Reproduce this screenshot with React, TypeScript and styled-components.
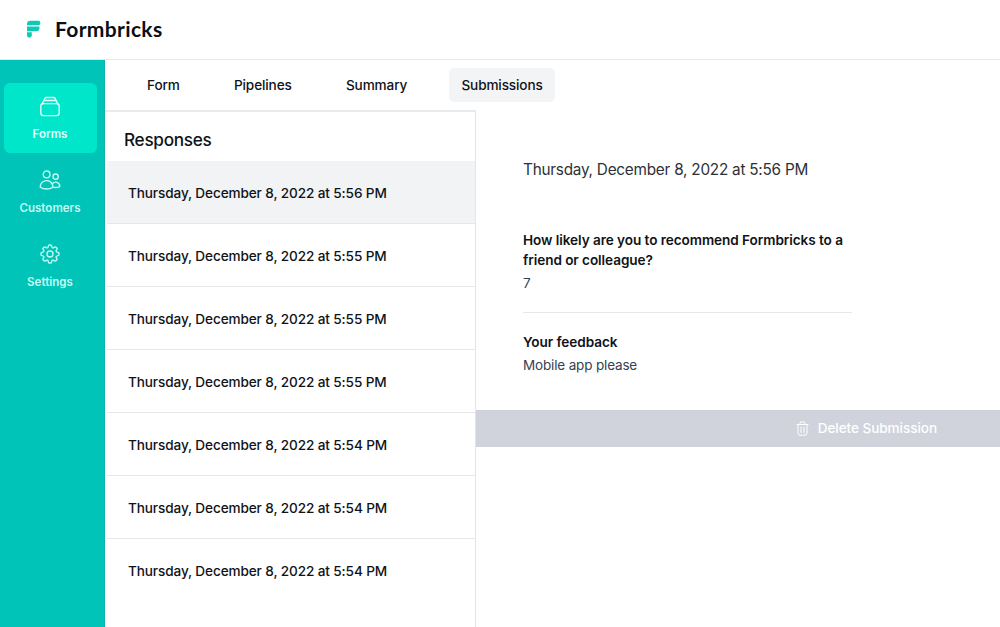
import React from "react";
import styled, { createGlobalStyle } from "styled-components";
import { HiOutlineCog8Tooth, HiOutlineUsers } from "react-icons/hi2";

const GlobalStyle = createGlobalStyle`
  *, *::before, *::after { box-sizing: border-box; }
  body { margin: 0; background: #fff; font-family: Inter, "Liberation Sans", sans-serif; color: #101317; }
  h1, h2, h3, p, ul { margin: 0; padding: 0; font-weight: inherit; font-size: inherit; }
  ul { list-style: none; }
`;

const Page = styled.div`
  display: flex;
  flex-direction: column;
  height: 627px;
  overflow: hidden;
`;

const Header = styled.header`
  display: flex;
  align-items: center;
  flex: none;
  height: 60px;
  padding: 0 0 1px 26px;
  border-bottom: 1px solid #e6e8ea;
`;

const Brand = styled.span`
  margin-left: 14px;
  font: 700 21px/28px Lato, sans-serif;
  letter-spacing: 0.34px;
  color: #0b0f14;
`;

const Body = styled.div`
  display: flex;
  flex: 1;
  min-height: 0;
`;

const Sidebar = styled.nav`
  display: flex;
  flex-direction: column;
  gap: 4px;
  flex: none;
  width: 105px;
  padding: 23px 7px 0 4px;
  background: #00c4b8;
  border-right: 1px solid #10b3a8;
`;

const NavItem = styled.a<{ $active?: boolean }>`
  display: flex;
  flex-direction: column;
  align-items: center;
  height: 70px;
  padding: 11px 1px 0 0;
  border-radius: 6px;
  background: ${(p) => (p.$active ? "#00e6ca" : "transparent")};
  color: ${(p) => (p.$active ? "#e6fffb" : "#c4fbf3")};
  font-size: 11.5px;
  font-weight: 600;
  line-height: 16px;
  letter-spacing: 0.04px;

  svg { width: 24px; height: 24px; margin-bottom: 8px; stroke-width: 1.35; }
`;

const Main = styled.main`
  display: flex;
  flex-direction: column;
  flex: 1;
  min-width: 0;
`;

const Tabs = styled.div`
  display: flex;
  align-items: center;
  gap: 30.2px;
  flex: none;
  height: 50px;
  padding-left: 30px;
`;

const Tab = styled.a<{ $active?: boolean }>`
  height: 34px;
  padding: 0 12px;
  border-radius: 5px;
  background: ${(p) => (p.$active ? "#f3f4f6" : "transparent")};
  font-size: 13.6px;
  font-weight: 500;
  line-height: 34px;
  letter-spacing: -0.12px;
`;

const Columns = styled.div`
  display: flex;
  flex: 1;
  min-height: 0;
`;

const Responses = styled.section`
  flex: none;
  width: 371px;
  border-top: 2px solid #e9eaec;
  border-right: 1px solid #e3e5e8;
`;

const ListTitle = styled.h2`
  height: 49px;
  padding: 15px 0 0 19px;
  font-size: 17.2px;
  font-weight: 500;
  line-height: 26px;
  letter-spacing: -0.3px;
`;

const Row = styled.li<{ $active?: boolean }>`
  height: 63px;
  margin-left: 2px;
  padding: 22px 0 0 21px;
  border-bottom: 1px solid #e5e7eb;
  background: ${(p) => (p.$active ? "#f2f3f5" : "transparent")};
  font-size: 13.6px;
  font-weight: 500;
  line-height: 20px;
  letter-spacing: -0.12px;

  &:last-child { border-bottom: 0; }
`;

const Detail = styled.section`
  flex: 1;
  min-width: 0;
`;

const Answers = styled.div`
  width: 376px;
  height: 300px;
  padding: 48px 0 0 47px;
`;

const Stamp = styled.p`
  margin-bottom: 49px;
  color: #2c3138;
  font-size: 15.3px;
  line-height: 24px;
  letter-spacing: -0.23px;
`;

const Answer = styled.div`
  & + & { margin-top: 18px; padding-top: 20px; border-top: 1px solid #e7e8ea; }
`;

const Question = styled.h3`
  font-size: 13.6px;
  font-weight: 600;
  line-height: 19.5px;
  letter-spacing: -0.07px;
`;

const Value = styled.p`
  margin-top: 4px;
  color: #374151;
  font-size: 13.5px;
  line-height: 19.5px;
  letter-spacing: -0.16px;
`;

const DeleteBar = styled.button`
  display: flex;
  align-items: center;
  justify-content: flex-end;
  gap: 9px;
  width: 100%;
  height: 37px;
  padding: 0 63px 1px 0;
  border: 0;
  background: #d0d3dc;
  color: #fff;
  font: 500 13.6px/20px Inter, sans-serif;
  letter-spacing: -0.08px;
`;

const LogoMark = () => (
  <svg width="15" height="18" viewBox="0 0 15 18">
    <path d="M1 5.2V4.2A3.4 3.4 0 0 1 4.4.8h8.1a1.9 1.9 0 0 1 1.9 1.9 2.5 2.5 0 0 1-2.5 2.5z" fill="#10c9b5" />
    <path d="M1 6.4h12.4v1.8a3 3 0 0 1-3 3H1z" fill="#10c9b5" />
    <path d="M1 12.3h4.8v3a2.4 2.4 0 0 1-4.8 0z" fill="#10c9b5" />
  </svg>
);

const StackIcon = () => (
  <svg viewBox="0 0 24 24" fill="none" stroke="currentColor" strokeLinecap="round" strokeLinejoin="round">
    <rect x="2.8" y="9.6" width="18.4" height="12" rx="2.6" />
    <path d="M4 10.2 5.8 6.5h12.4l1.8 3.7M6 6.4l1-2.2q.3-.7 1-.7h8q.7 0 1 .7l1 2.2" />
  </svg>
);

const TrashIcon = () => (
  <svg width="13" height="15" viewBox="0 0 13 15" fill="none" stroke="currentColor" strokeLinecap="round">
    <path d="M1 3.5h11M4 3.3V2a1 1 0 0 1 1-1h3a1 1 0 0 1 1 1v1.3M2 3.7v8.5a2 2 0 0 0 2 2h5a2 2 0 0 0 2-2V3.7M5 6v5.5M8 6v5.5" />
  </svg>
);

const tabs = ["Form", "Pipelines", "Summary", "Submissions"];
const times = ["5:56", "5:55", "5:55", "5:55", "5:54", "5:54", "5:54"];

export default function App() {
  return (
    <Page>
      <GlobalStyle />
      <Header>
        <LogoMark />
        <Brand>Formbricks</Brand>
      </Header>
      <Body>
        <Sidebar>
          <NavItem $active><StackIcon />Forms</NavItem>
          <NavItem><HiOutlineUsers />Customers</NavItem>
          <NavItem><HiOutlineCog8Tooth />Settings</NavItem>
        </Sidebar>
        <Main>
          <Tabs>
            {tabs.map((t) => <Tab key={t} $active={t === "Submissions"}>{t}</Tab>)}
          </Tabs>
          <Columns>
            <Responses>
              <ListTitle>Responses</ListTitle>
              <ul>
                {times.map((t, i) => (
                  <Row key={i} $active={i === 0}>Thursday, December 8, 2022 at {t} PM</Row>
                ))}
              </ul>
            </Responses>
            <Detail>
              <Answers>
                <Stamp>Thursday, December 8, 2022 at 5:56 PM</Stamp>
                <Answer>
                  <Question>How likely are you to recommend Formbricks to a friend or colleague?</Question>
                  <Value>7</Value>
                </Answer>
                <Answer>
                  <Question>Your feedback</Question>
                  <Value>Mobile app please</Value>
                </Answer>
              </Answers>
              <DeleteBar><TrashIcon />Delete Submission</DeleteBar>
            </Detail>
          </Columns>
        </Main>
      </Body>
    </Page>
  );
}
